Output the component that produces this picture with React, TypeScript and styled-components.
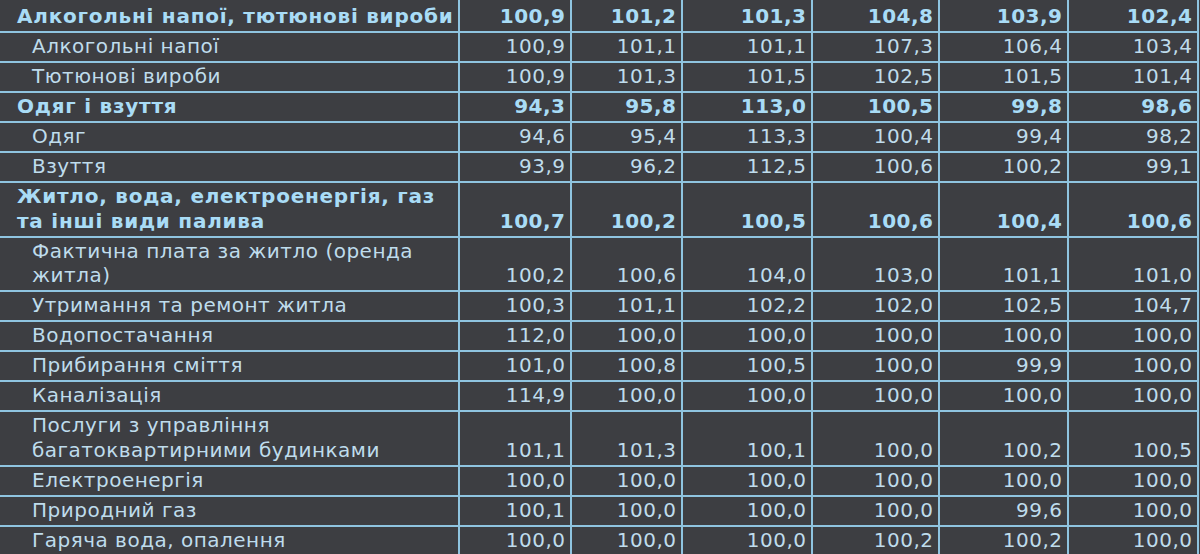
import React from "react";
import styled, { createGlobalStyle } from "styled-components";

const Global = createGlobalStyle`
  html, body {
    margin: 0;
    padding: 0;
    background: #3d3e42;
    overflow: hidden;
  }
  body {
    font-family: "DejaVu Sans", Verdana, sans-serif;
  }
`;

const LINE = "#8fc4e0";

const Table = styled.div`
  display: flex;
  flex-direction: column;
  width: 1199px;
  background: #3d3e42;
`;

const Row = styled.div<{ $first?: boolean }>`
  display: grid;
  grid-template-columns: 460px 112px 111px 130px 127px 129px 130px;
  border-bottom: 2px solid ${LINE};
  & > * {
    padding-top: ${(p) => (p.$first ? "4px" : "1px")};
  }
`;

const Cell = styled.div<{ $bold: boolean }>`
  box-sizing: border-box;
  border-right: 2px solid ${LINE};
  padding-right: 4.5px;
  padding-bottom: 2.2px;
  padding-left: 5px;
  font-size: 20px;
  line-height: 24.8px;
  letter-spacing: 0.5px;
  font-weight: ${(p) => (p.$bold ? 700 : 400)};
  color: ${(p) => (p.$bold ? "#a9dcf6" : "#bfdcec")};
  white-space: nowrap;
`;

const Label = styled(Cell)<{ $indent: boolean }>`
  padding-left: ${(p) => (p.$indent ? "32px" : "17px")};
  letter-spacing: ${(p) => (p.$bold ? "0.75px" : "0.5px")};
`;

const Value = styled(Cell)`
  display: flex;
  align-items: flex-end;
  justify-content: flex-end;
`;

type R = { label: string[]; bold?: boolean; v: string[] };

const rows: R[] = [
  { label: ["Алкогольні напої, тютюнові вироби"], bold: true, v: ["100,9", "101,2", "101,3", "104,8", "103,9", "102,4"] },
  { label: ["Алкогольні напої"], v: ["100,9", "101,1", "101,1", "107,3", "106,4", "103,4"] },
  { label: ["Тютюнові вироби"], v: ["100,9", "101,3", "101,5", "102,5", "101,5", "101,4"] },
  { label: ["Одяг і взуття"], bold: true, v: ["94,3", "95,8", "113,0", "100,5", "99,8", "98,6"] },
  { label: ["Одяг"], v: ["94,6", "95,4", "113,3", "100,4", "99,4", "98,2"] },
  { label: ["Взуття"], v: ["93,9", "96,2", "112,5", "100,6", "100,2", "99,1"] },
  { label: ["Житло, вода, електроенергія, газ", "та інші види палива"], bold: true, v: ["100,7", "100,2", "100,5", "100,6", "100,4", "100,6"] },
  { label: ["Фактична плата за житло (оренда", "житла)"], v: ["100,2", "100,6", "104,0", "103,0", "101,1", "101,0"] },
  { label: ["Утримання та ремонт житла"], v: ["100,3", "101,1", "102,2", "102,0", "102,5", "104,7"] },
  { label: ["Водопостачання"], v: ["112,0", "100,0", "100,0", "100,0", "100,0", "100,0"] },
  { label: ["Прибирання сміття"], v: ["101,0", "100,8", "100,5", "100,0", "99,9", "100,0"] },
  { label: ["Каналізація"], v: ["114,9", "100,0", "100,0", "100,0", "100,0", "100,0"] },
  { label: ["Послуги з управління", "багатоквартирними будинками"], v: ["101,1", "101,3", "100,1", "100,0", "100,2", "100,5"] },
  { label: ["Електроенергія"], v: ["100,0", "100,0", "100,0", "100,0", "100,0", "100,0"] },
  { label: ["Природний газ"], v: ["100,1", "100,0", "100,0", "100,0", "99,6", "100,0"] },
  { label: ["Гаряча вода, опалення"], v: ["100,0", "100,0", "100,0", "100,2", "100,2", "100,0"] },
];

export default function App() {
  return (
    <>
      <Global />
      <Table>
        {rows.map((r, i) => (
          <Row key={i} $first={i === 0}>
            <Label $bold={!!r.bold} $indent={!r.bold}>
              {r.label.map((l, j) => (
                <React.Fragment key={j}>
                  {j > 0 && <br />}
                  {l}
                </React.Fragment>
              ))}
            </Label>
            {r.v.map((x, j) => (
              <Value key={j} $bold={!!r.bold}>
                {x}
              </Value>
            ))}
          </Row>
        ))}
      </Table>
    </>
  );
}
